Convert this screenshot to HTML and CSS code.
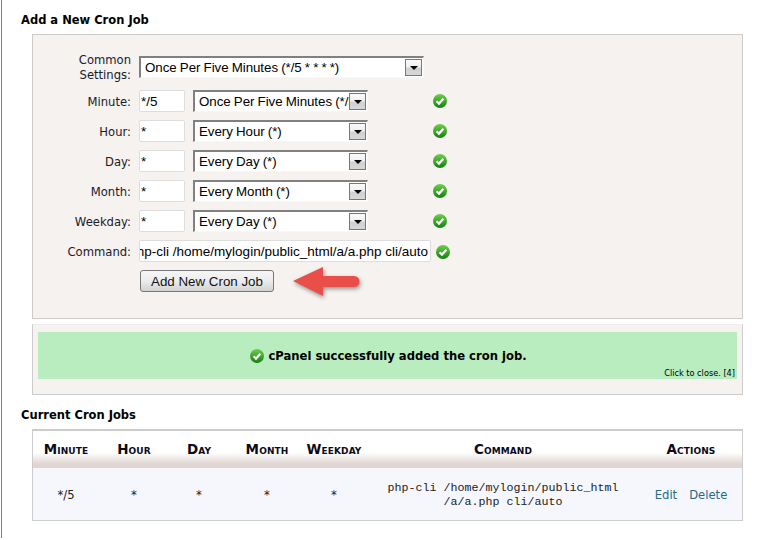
FILE: index.html
```html
<!DOCTYPE html>
<html lang="en">
<head>
<meta charset="utf-8">
<title>Cron Jobs</title>
<link rel="stylesheet" href="styles.css">
</head>
<body>
<svg class="defs" width="0" height="0" aria-hidden="true">
  <defs>
    <linearGradient id="g" x1="0" y1="0" x2="0" y2="1"><stop offset="0" stop-color="#6fd04a"/><stop offset="1" stop-color="#128010"/></linearGradient>
    <symbol id="check" viewBox="0 0 14 14">
      <circle cx="7" cy="7" r="7" fill="url(#g)"/>
      <path d="M3.6 7.2 6 9.6 10.4 4.8" fill="none" stroke="#fff" stroke-width="2.2"/>
    </symbol>
  </defs>
</svg>
<main class="page">
  <h2 class="heading first">Add a New Cron Job</h2>
  <section class="panel form">
    <div class="row common">
      <div class="label">Common<br>Settings:</div>
      <div class="select wide"><span class="sel-text">Once Per Five Minutes (*/5 * * * *)</span><span class="drop"><i></i></span></div>
    </div>
    <div class="row">
      <div class="label">Minute:</div><div class="input">*/5</div>
      <div class="select"><span class="sel-text">Once Per Five Minutes (*/5 * * * *)</span><span class="drop"><i></i></span></div>
      <svg class="ok"><use href="#check"/></svg>
    </div>
    <div class="row">
      <div class="label">Hour:</div><div class="input">*</div>
      <div class="select"><span class="sel-text">Every Hour (*)</span><span class="drop"><i></i></span></div>
      <svg class="ok"><use href="#check"/></svg>
    </div>
    <div class="row">
      <div class="label">Day:</div><div class="input">*</div>
      <div class="select"><span class="sel-text">Every Day (*)</span><span class="drop"><i></i></span></div>
      <svg class="ok"><use href="#check"/></svg>
    </div>
    <div class="row">
      <div class="label">Month:</div><div class="input">*</div>
      <div class="select"><span class="sel-text">Every Month (*)</span><span class="drop"><i></i></span></div>
      <svg class="ok"><use href="#check"/></svg>
    </div>
    <div class="row">
      <div class="label">Weekday:</div><div class="input">*</div>
      <div class="select"><span class="sel-text">Every Day (*)</span><span class="drop"><i></i></span></div>
      <svg class="ok"><use href="#check"/></svg>
    </div>
    <div class="row">
      <div class="label">Command:</div>
      <div class="input command"><span>php-cli /home/mylogin/public_html/a/a.php cli/auto</span></div>
      <svg class="ok near"><use href="#check"/></svg>
    </div>
    <div class="actions">
      <button class="btn" type="button">Add New Cron Job</button>
      <svg class="arrow" width="68" height="32" viewBox="0 0 68 32">
        <path d="M0 16 30 2V11H61A5.500 5.500 0 0 1 61 22H30V31Z" fill="#ea4e48"/>
      </svg>
    </div>
  </section>
  <section class="panel notice">
    <div class="success">
      <p class="msg"><svg class="ok-inline"><use href="#check"/></svg>cPanel successfully added the cron job.</p>
      <p class="close">Click to close. [4]</p>
    </div>
  </section>
  <h2 class="heading second">Current Cron Jobs</h2>
  <section class="panel jobs">
    <table class="table">
      <thead>
        <tr>
          <th class="c1">Minute</th><th class="c2">Hour</th><th class="c3">Day</th><th class="c4">Month</th><th class="c5">Weekday</th><th class="c6">Command</th><th class="c7">Actions</th>
        </tr>
      </thead>
      <tbody>
        <tr>
          <td>*/5</td><td>*</td><td>*</td><td>*</td><td>*</td>
          <td class="cmd">php-cli /home/mylogin/public_html<br>/a/a.php cli/auto</td>
          <td class="links"><a href="#">Edit</a><a href="#">Delete</a></td>
        </tr>
      </tbody>
    </table>
  </section>
</main>
</body>
</html>
```
FILE: styles.css
```css
* { box-sizing: border-box; }
html, body { margin: 0; background: #fff; }
.defs { position: absolute; }
.page {
  margin-left: 1px;
  width: 762px;
  height: 538px;
  border-left: 1px solid #808080;
  padding: 0 19px 0 30px;
  font: 11.6px "DejaVu Sans", Verdana, sans-serif;
  color: #000;
  overflow: hidden;
}
.heading { margin: 0 0 0 -11px; font-size: 11.5px; line-height: 14px; font-weight: bold; }
.first { padding-top: 13px; margin-bottom: 7px; }
.second { margin-top: 13px; margin-bottom: 7px; }
.panel { width: 711px; border: 1px solid #ccc; background: #f5f2ef; }
.form { height: 285px; padding-top: 21px; }
.row { display: flex; align-items: center; height: 22px; margin-bottom: 8px; }
.common { height: 22px; margin-bottom: 12px; }
.label { width: 98px; flex: none; text-align: right; line-height: 15px; padding-top: 2px; color: #1a1a2a; margin-right: 8px; white-space: nowrap; }
.input {
  width: 46px; height: 22px; flex: none;
  margin-right: 8px; padding: 2px 1px;
  background: #fff; border: 1px solid #ddd; border-radius: 2px;
  font: 13.5px/17px "Liberation Sans", Arial, sans-serif;
}
.command {
  width: 292px; margin-right: 5px; padding: 2px 2px 2px 0;
  display: flex; justify-content: flex-end; overflow: hidden; white-space: nowrap;
}
.command span { flex: none; }
.select {
  position: relative; width: 175px; height: 22px; flex: none;
  background: #fff;
  border-top: 2px solid #808080; border-left: 2px solid #808080;
  border-right: 1px solid #f7f7f7; border-bottom: 1px solid #f7f7f7;
  padding-left: 4px;
  font: 13.33px/19px "Liberation Sans", Arial, sans-serif;
  letter-spacing: -.05px; word-spacing: -.5px;
  white-space: nowrap; overflow: hidden;
}
.wide { width: 285px; }
.drop {
  position: absolute; right: 1px; top: 1px;
  width: 17px; height: 17px;
  border: 1px solid #777;
  background: linear-gradient(#fafafa, #f0f0f0 45%, #d0d0d0 55%, #d8d8d8);
  display: flex; align-items: center; justify-content: center;
}
.drop i { display: block; width: 0; height: 0; border: 4px solid transparent; border-top-color: #000; border-bottom-width: 0; }
.ok { width: 14px; height: 14px; margin-left: 65px; flex: none; }
.ok.near { margin-left: 0; margin-top: 2px; }
.ok-inline { width: 14px; height: 14px; vertical-align: -3px; margin-right: 4px; }
.actions { display: flex; align-items: flex-start; margin: 1px 0 0 107px; }
.btn {
  width: 134px; height: 22px; padding: 1px 0 0;
  border: 1px solid #777; border-radius: 3px;
  background: linear-gradient(#f6f6f6, #ececec 50%, #d2d2d2);
  font: 13.33px "Liberation Sans", Arial, sans-serif; color: #111;
}
.arrow { margin-left: 19px; margin-top: -5px; flex: none; filter: drop-shadow(1px 2px 2px rgba(0,0,0,.4)); overflow: visible; }
.notice { height: 71px; margin-top: 5px; padding: 7px 5px 0; border-top-color: #eee; }
.success { width: 699px; height: 47px; background: #b9edc0; display: flex; flex-direction: column; align-items: stretch; }
.msg { margin: 16px 0 0 2px; text-align: center; font-weight: bold; line-height: 16px; }
.close { margin: 4px 2px 0 0; text-align: right; font-size: 8.2px; line-height: 10px; }
.jobs { height: 92px; background: #f6f7fc; border-top-width: 2px; }
.table { width: 709px; table-layout: fixed; border-collapse: collapse; }
th {
  height: 37px; padding: 0 0 2px; font-size: 13.5px; letter-spacing: .1px; font-weight: bold; font-variant: small-caps; text-align: center;
  background: linear-gradient(#fff 0, #fff 58%, #e0d5d0 90%, #e0d5d0 100%);
  color: #0a0a1a;
}
.c1 { width: 66px; } .c2 { width: 70px; } .c3 { width: 60px; } .c4 { width: 76px; } .c5 { width: 58px; } .c6 { width: 280px; } .c7 { width: 99px; padding-right: 3px; }
td { height: 53px; padding: 0; text-align: center; vertical-align: middle; color: #222; }
td.cmd { font: 11.67px/14px "Liberation Mono", "Courier New", monospace; vertical-align: middle; }
td.links { padding-right: 3px; }
.links a { color: #1f6a8c; text-decoration: none; margin: 0 6px; }
```
